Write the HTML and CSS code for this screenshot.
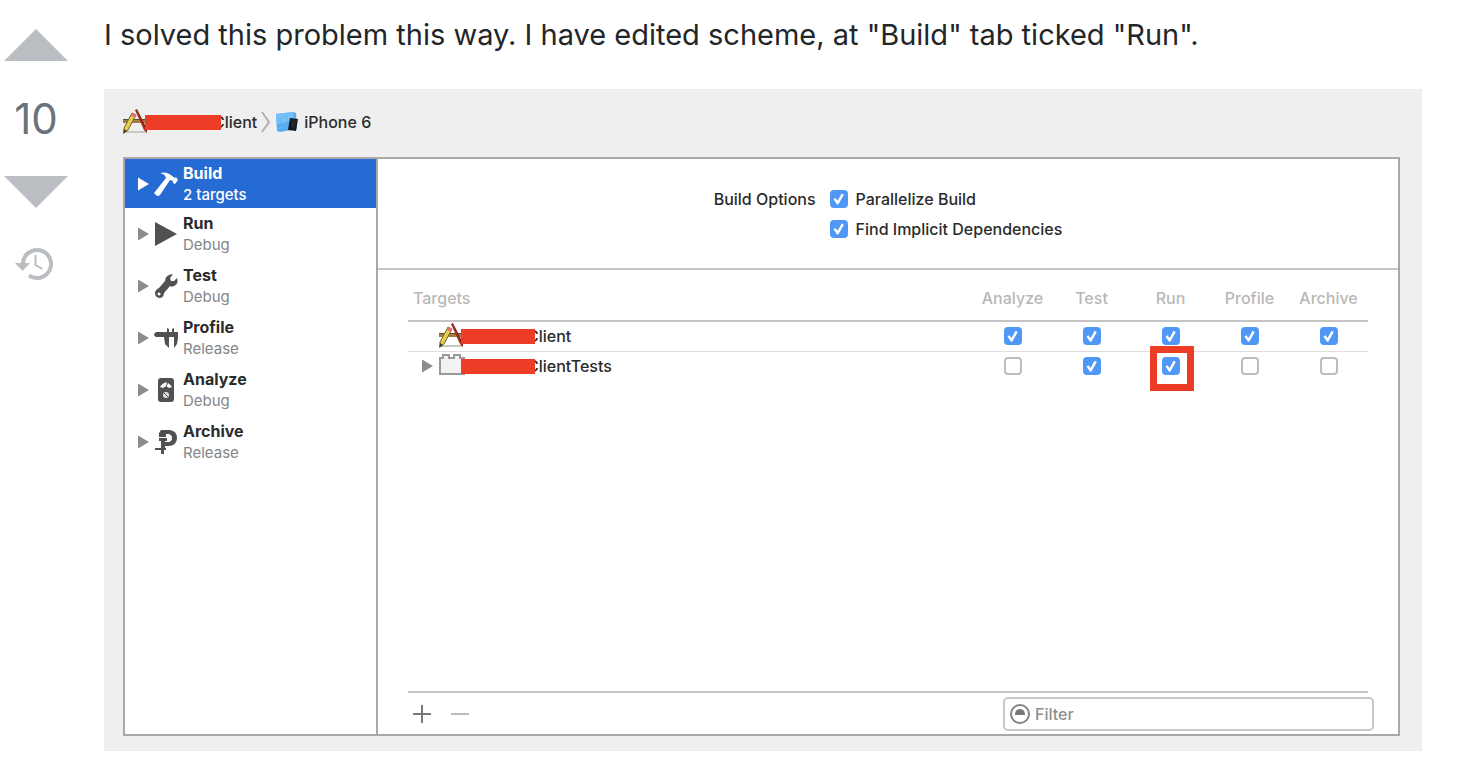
FILE: index.html
```html
<!DOCTYPE html>
<html lang="en">
<head>
  <meta charset="UTF-8" />
  <meta name="viewport" content="width=device-width, initial-scale=1.0" />
  <title>Answer - edit scheme</title>
  <link rel="stylesheet" href="styles.css">
</head>
<body>
  <!-- shared icons -->
  <svg class="defs" aria-hidden="true">
    <symbol id="app-icon" viewBox="0 0 26 26">
      <path d="M3 22h20v2H2z" fill="#c9c7c2" />
      <path d="M0 10h25v4H0z" fill="#a87b45" />
      <path d="M0 10h25v1H0z" fill="#6b4a24" />
      <path d="M12 1l2-1 10 20 0 4-3-3z" fill="#8e2013" />
      <path d="M13 1l9 20" stroke="#a8382a" fill="none" />
      <path d="M9 4l4 2-8 15-4 3 0-5z" fill="#e3ce56" stroke="#75631f" />
      <path d="M9 4l4 2-1 3-4-2z" fill="#ee6d78" />
      <path d="M1 20l3 2-4 3z" fill="#4a3a22" />
    </symbol>
    <symbol id="disclosure" viewBox="0 0 12 14">
      <path d="M1 0.500l11 6.500-11 6.500z" fill="currentColor" />
    </symbol>
  </svg>

  <div class="answer">
    <div class="votes">
      <button class="vote" aria-label="Up vote">
        <svg width="64" height="32" viewBox="0 0 64 32"><path d="M0 32L32 0l32 32z" fill="currentColor" /></svg>
      </button>
      <div class="score">10</div>
      <button class="vote" aria-label="Down vote">
        <svg width="64" height="32" viewBox="0 0 64 32"><path d="M0 0h64L32 32z" fill="currentColor" /></svg>
      </button>
      <a class="history" href="#" aria-label="Show activity">
        <svg width="42" height="34" viewBox="0 0 42 34" fill="none" stroke="currentColor">
          <path d="M8 17A14 14 0 1 1 14 28.500" stroke-width="4" />
          <path d="M0 16h15l-7.500 8z" fill="currentColor" stroke="none" />
          <path d="M20.500 8v10l7 4" stroke-width="2" />
        </svg>
      </a>
    </div>

    <div class="post">
      <p class="post-text">I solved this problem this way. I have edited scheme, at "Build" tab ticked "Run".</p>

      <div class="scheme">
        <div class="breadcrumb">
          <svg class="app-icon"><use href="#app-icon" /></svg>
          <span class="redacted"></span>
          <span class="cut">Client</span>
          <svg class="chevron" width="10" height="22" viewBox="0 0 10 22"><path d="M1 1l7 10-7 10" fill="none" stroke="#b0b0b0" stroke-width="2" /></svg>
          <svg class="device" width="24" height="22" viewBox="0 0 24 22">
            <path d="M1 3l17-2 3 1 1 16-17 3-3-1z" fill="#56aef2" />
            <path d="M1 3l17-2 2 8-18 4z" fill="#74c0f8" />
            <path d="M5 10l6-7 2 8 6-5M4 18l8-8" stroke="#6ab8f4" fill="none" />
            <path d="M15 7l8 1-2 12-8-1z" fill="#17191d" />
            <path d="M17 9l4 1-1 7-4-1z" fill="#24282e" />
          </svg>
          <span>iPhone 6</span>
        </div>

        <div class="window">
          <nav class="sidebar">
            <a class="action active" href="#">
              <svg class="arrow"><use href="#disclosure" /></svg>
              <svg class="icon" viewBox="0 0 24 24" fill="currentColor">
                <path d="M6 1Q13-1 18 4l3 2 1-1 2 3-3 4-2-1 0-2-3-1L6 23q-2 2-4 0l-2-2L12 6Q11 2 6 1z" />
              </svg>
              <span class="label"><b>Build</b><small>2 targets</small></span>
            </a>
            <a class="action" href="#">
              <svg class="arrow"><use href="#disclosure" /></svg>
              <svg class="icon" viewBox="0 0 24 24" fill="currentColor"><path d="M1 0l22 12L1 24z" /></svg>
              <span class="label"><b>Run</b><small>Debug</small></span>
            </a>
            <a class="action" href="#">
              <svg class="arrow"><use href="#disclosure" /></svg>
              <svg class="icon" viewBox="0 0 24 24" fill="currentColor">
                <path fill-rule="evenodd" d="M19 0l-3 4 1 3 3 0 3-3q2 6-3 8-2 1-4 0l-6 7q0 5-5 5-4-1-4-5 0-3 4-5l6-7Q11 1 19 0zM5 18.500a1.500 1.500 0 1 0 .1 0z" />
              </svg>
              <span class="label"><b>Test</b><small>Debug</small></span>
            </a>
            <a class="action" href="#">
              <svg class="arrow"><use href="#disclosure" /></svg>
              <svg class="icon" viewBox="0 0 24 24" fill="currentColor">
                <path d="M2 6h11V2l2 1v3h3V3l2-1v4h4v6l-1 6-3 4V11h-5v11l-4-4-1-7H2q-4-2 0-5z" />
              </svg>
              <span class="label"><b>Profile</b><small>Release</small></span>
            </a>
            <a class="action" href="#">
              <svg class="arrow"><use href="#disclosure" /></svg>
              <svg class="icon" viewBox="0 0 24 24">
                <rect x="4" width="16" height="24" rx="3" fill="currentColor" />
                <path d="M6 9q6-9 12 0l-3 1q-3-3-6 0z" fill="#fff" />
                <path d="M12 9l2-5" stroke="#515151" />
                <circle cx="12" cy="17" r="3" fill="#e4e4e4" />
                <path d="M10 15l4 4" stroke="#515151" />
              </svg>
              <span class="label"><b>Analyze</b><small>Debug</small></span>
            </a>
            <a class="action" href="#">
              <svg class="arrow"><use href="#disclosure" /></svg>
              <svg class="icon" viewBox="0 0 24 24" fill="currentColor">
                <path d="M7 0h9q7 1 7 8t-8 8h-4v-4h4q3-1 3-4t-3-4h-3v3H5V3z" />
                <path d="M5 8h8v3h-2v7h1v2h-2v4H7v-4H1v-2h6v-7H5z" />
              </svg>
              <span class="label"><b>Archive</b><small>Release</small></span>
            </a>
          </nav>

          <div class="main">
            <div class="options">
              <span>Build Options</span>
              <div class="option-list">
                <label><input type="checkbox" checked /> Parallelize Build</label>
                <label><input type="checkbox" checked /> Find Implicit Dependencies</label>
              </div>
            </div>

            <div class="targets">
              <table>
                <thead>
                  <tr><th>Targets</th><th>Analyze</th><th>Test</th><th>Run</th><th>Profile</th><th>Archive</th></tr>
                </thead>
                <tbody>
                  <tr>
                    <td>
                      <div class="target">
                        <span class="arrow"></span>
                        <svg class="app-icon"><use href="#app-icon" /></svg>
                        <span class="redacted"></span>
                        <span class="cut">Client</span>
                      </div>
                    </td>
                    <td><input type="checkbox" aria-label="Client Analyze" checked /></td>
                    <td><input type="checkbox" aria-label="Client Test" checked /></td>
                    <td><input type="checkbox" aria-label="Client Run" checked /></td>
                    <td><input type="checkbox" aria-label="Client Profile" checked /></td>
                    <td><input type="checkbox" aria-label="Client Archive" checked /></td>
                  </tr>
                  <tr>
                    <td>
                      <div class="target">
                        <svg class="arrow"><use href="#disclosure" /></svg>
                        <svg class="app-icon" viewBox="0 0 26 26">
                          <path d="M1 21V5h3V2h6v3h5V2h6v3h4v16z" fill="#f2f2f2" stroke="#999" stroke-width="2" />
                        </svg>
                        <span class="redacted"></span>
                        <span class="cut">ClientTests</span>
                      </div>
                    </td>
                    <td><input type="checkbox" aria-label="ClientTests Analyze" /></td>
                    <td><input type="checkbox" aria-label="ClientTests Test" checked /></td>
                    <td class="marked"><input type="checkbox" aria-label="ClientTests Run" checked /></td>
                    <td><input type="checkbox" aria-label="ClientTests Profile" /></td>
                    <td><input type="checkbox" aria-label="ClientTests Archive" /></td>
                  </tr>
                </tbody>
              </table>
            </div>

            <div class="footer">
              <button class="tool" aria-label="Add">
                <svg width="18" height="18" viewBox="0 0 18 18"><path d="M9 0v18M0 9h18" stroke="#777" stroke-width="2" /></svg>
              </button>
              <button class="tool" aria-label="Remove" disabled>
                <svg width="18" height="18" viewBox="0 0 18 18"><path d="M0 9h18" stroke="#bbb" stroke-width="2" /></svg>
              </button>
              <label class="filter">
                <svg width="20" height="20" viewBox="0 0 20 20">
                  <circle cx="10" cy="10" r="9" fill="none" stroke="#858585" stroke-width="2" />
                  <path d="M5 11q0-6 5-6t5 6z" fill="#777" />
                </svg>
                <input type="text" placeholder="Filter" aria-label="Filter" />
              </label>
            </div>
          </div>
        </div>
      </div>
    </div>
  </div>
</body>
</html>
```
FILE: styles.css
```css
* {
  box-sizing: border-box;
}

body {
  margin: 0;
  background-color: #fff;
  color: #232629;
  font-family: Inter, "Liberation Sans", sans-serif;
}

svg {
  display: block;
  flex: none;
}

button {
  display: block;
  padding: 0;
  border: none;
  background: none;
  color: inherit;
  cursor: pointer;
}

a {
  color: inherit;
  text-decoration: none;
}

.defs {
  position: absolute;
  width: 0;
  height: 0;
}

.answer {
  display: flex;
  gap: 32px;
  padding: 12px 56px 27px 0;
}

/* vote column */
.votes {
  flex: none;
  width: 72px;
  padding-top: 17px;
  display: flex;
  flex-direction: column;
  align-items: center;
  color: #babdc2;
}

.score {
  margin: 32px 0;
  font-size: 42px;
  line-height: 51px;
  color: #6a737c;
}

.history {
  margin-top: 39px;
}

/* answer body */
.post {
  flex: 1;
  min-width: 0;
}

.post-text {
  margin: 0 0 31px;
  font-size: 29px;
  line-height: 46px;
}

.scheme {
  padding: 16px 22px 15px 19px;
  background-color: #efefef;
  color: #2b2b2b;
  font-size: 16px;
  font-weight: 500;
  line-height: 20px;
}

.breadcrumb {
  display: flex;
  align-items: center;
  height: 34px;
  margin-bottom: 18px;
}

.app-icon {
  width: 26px;
  height: 26px;
  margin-right: -4px;
}

.redacted {
  position: relative;
  z-index: 1;
  flex: none;
  width: 76px;
  height: 15px;
  background-color: #ec3e26;
}

.target .redacted {
  width: 74px;
}

.cut {
  margin-left: -8px;
}

.chevron {
  margin: 0 4px;
}

.device {
  margin-right: 5px;
}

.window {
  display: flex;
  border: 2px solid #a8a8a8;
  background-color: #fff;
}

/* scheme actions */
.sidebar {
  flex: none;
  width: 253px;
  border-right: 2px solid #a8a8a8;
}

.action {
  display: flex;
  align-items: center;
  height: 52px;
  padding-left: 12px;
}

.action.active {
  height: 49px;
  background-color: #266bd3;
  color: #fff;
}

.arrow {
  flex: none;
  width: 12px;
  height: 14px;
  color: #8c8c8c;
}

.icon {
  width: 24px;
  height: 24px;
  margin: 0 5px;
  color: #515151;
}

.active .arrow,
.active .icon {
  color: #fff;
}

.label b,
.label small {
  display: block;
  line-height: 21px;
}

.label b {
  font-size: 16px;
}

.label small {
  font-size: 15px;
  font-weight: normal;
  color: #858585;
}

.active .label small {
  font-weight: 500;
  color: #fff;
}

/* right side */
.main {
  flex: 1;
  min-width: 0;
  display: flex;
  flex-direction: column;
}

.options {
  display: flex;
  justify-content: center;
  gap: 14px;
  padding: 30px 0 29px;
  border-bottom: 2px solid #c4c4c4;
}

.option-list {
  display: flex;
  flex-direction: column;
  gap: 10px;
}

.option-list label {
  display: flex;
  align-items: center;
  gap: 8px;
}

input[type="checkbox"] {
  appearance: none;
  display: grid;
  place-items: center;
  width: 18px;
  height: 18px;
  margin: 0;
  border: 2px solid #bdbdbd;
  border-radius: 4px;
  background-color: #fff;
}

input[type="checkbox"]:checked {
  border-color: #4f98f7;
  background-color: #4f98f7;
}

input[type="checkbox"]:checked::before {
  content: "";
  width: 12px;
  height: 12px;
  background-color: #fff;
  clip-path: polygon(8% 52%, 24% 42%, 42% 64%, 76% 4%, 94% 14%, 48% 96%, 36% 94%);
}

.targets {
  flex: 1;
  min-height: 423px;
  margin: 0 30px;
  border-bottom: 2px solid #c4c4c4;
}

table {
  width: 100%;
  table-layout: fixed;
  border-collapse: collapse;
}

th {
  width: 79px;
  height: 51px;
  padding: 6px 0 0;
  border-bottom: 2px solid #c4c4c4;
  font-size: 16px;
  font-weight: 500;
  color: #b8b8b8;
}

th:first-child {
  width: auto;
  padding-left: 5px;
  text-align: left;
}

td {
  position: relative;
  height: 30px;
  padding: 0;
}

td input[type="checkbox"] {
  margin: 0 auto;
}

tbody tr + tr td {
  border-top: 1px solid #dedede;
}

.target {
  display: flex;
  align-items: center;
  height: 26px;
  padding-left: 13px;
}

.target .app-icon {
  margin-left: 6px;
}

.marked::after {
  content: "";
  position: absolute;
  top: -6px;
  left: 19px;
  box-sizing: border-box;
  width: 44px;
  height: 45px;
  border: 7px solid #ec3e26;
}

.footer {
  display: flex;
  align-items: center;
  gap: 20px;
  padding: 4px 24px 3px 35px;
}

.filter {
  display: flex;
  align-items: center;
  gap: 5px;
  width: 371px;
  height: 34px;
  margin-left: auto;
  padding: 0 5px;
  border: 2px solid #c8c8c8;
  border-radius: 5px;
}

.filter input {
  flex: 1;
  min-width: 0;
  padding: 0;
  border: none;
  outline: none;
  background: none;
  font: inherit;
}

.filter input::placeholder {
  color: #8f8f8f;
}
```
